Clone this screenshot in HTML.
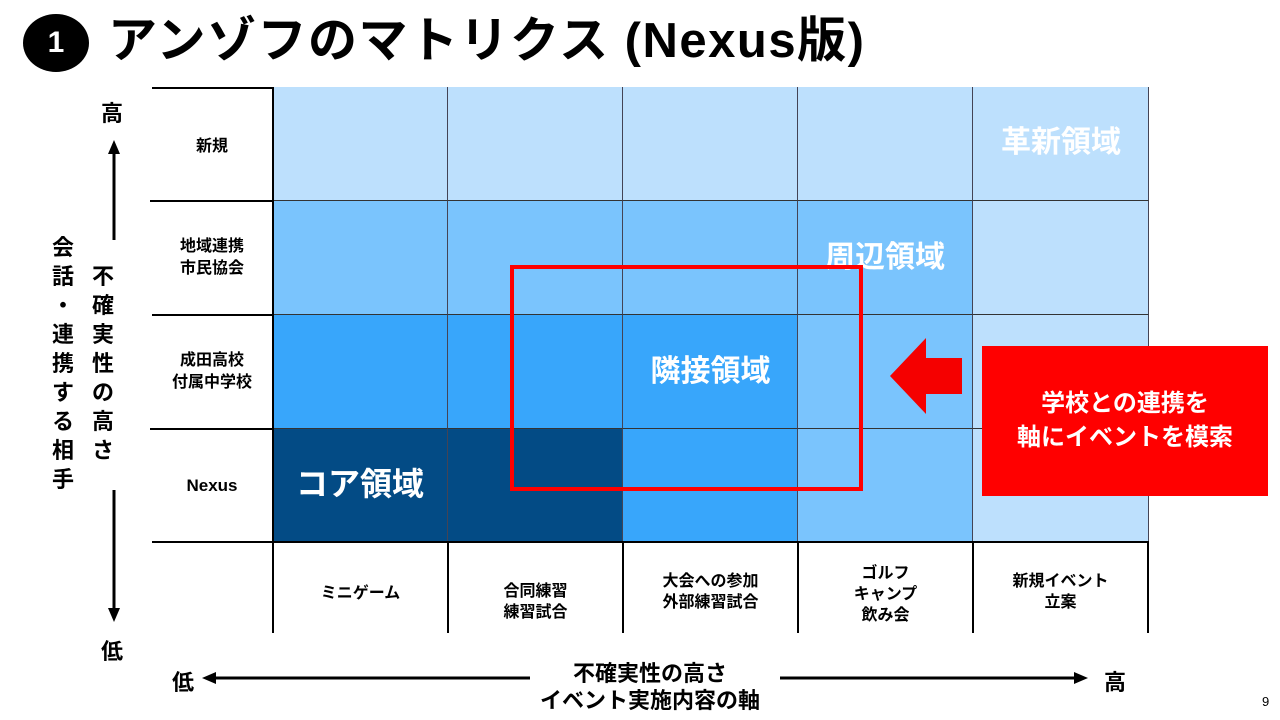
<!DOCTYPE html>
<html><head><meta charset="utf-8"><style>
*{margin:0;padding:0;box-sizing:border-box}
body{width:1280px;height:720px;background:#fff;position:relative;overflow:hidden;font-family:"Liberation Sans","Noto Sans CJK JP",sans-serif;font-weight:bold;color:#000}
.a{position:absolute}
.c{position:absolute;display:flex;align-items:center;justify-content:center;text-align:center}
.L{background:#BDE0FD}.M{background:#7AC4FD}.B{background:#38A6FB}.D{background:#034B85}
.h{position:absolute;background:#000;height:2px}
.v{position:absolute;background:#000;width:2px}
.cell{position:absolute;border-right:1px solid #445;border-bottom:1px solid #333}
</style></head><body>
<div class="c" style="left:23px;top:14px;width:66px;height:58px;border-radius:50%;background:#000;color:#fff;font-size:30px">1</div>
<div class="a" style="left:108px;top:10px;font-size:49px;line-height:62px;white-space:nowrap;letter-spacing:1.5px">アンゾフのマトリクス (Nexus版)</div>

<div class="cell L" style="left:273px;top:87px;width:175px;height:114px"></div>
<div class="cell L" style="left:448px;top:87px;width:175px;height:114px"></div>
<div class="cell L" style="left:623px;top:87px;width:175px;height:114px"></div>
<div class="cell L" style="left:798px;top:87px;width:175px;height:114px"></div>
<div class="cell L" style="left:973px;top:87px;width:176px;height:114px"></div>
<div class="cell M" style="left:273px;top:201px;width:175px;height:114px"></div>
<div class="cell M" style="left:448px;top:201px;width:175px;height:114px"></div>
<div class="cell M" style="left:623px;top:201px;width:175px;height:114px"></div>
<div class="cell M" style="left:798px;top:201px;width:175px;height:114px"></div>
<div class="cell L" style="left:973px;top:201px;width:176px;height:114px"></div>
<div class="cell B" style="left:273px;top:315px;width:175px;height:114px"></div>
<div class="cell B" style="left:448px;top:315px;width:175px;height:114px"></div>
<div class="cell B" style="left:623px;top:315px;width:175px;height:114px"></div>
<div class="cell M" style="left:798px;top:315px;width:175px;height:114px"></div>
<div class="cell L" style="left:973px;top:315px;width:176px;height:114px"></div>
<div class="cell D" style="left:273px;top:429px;width:175px;height:114px"></div>
<div class="cell D" style="left:448px;top:429px;width:175px;height:114px"></div>
<div class="cell B" style="left:623px;top:429px;width:175px;height:114px"></div>
<div class="cell M" style="left:798px;top:429px;width:175px;height:114px"></div>
<div class="cell L" style="left:973px;top:429px;width:176px;height:114px"></div>

<div class="h" style="left:152px;top:87px;width:122px"></div>
<div class="h" style="left:150px;top:200px;width:124px"></div>
<div class="h" style="left:152px;top:314px;width:122px"></div>
<div class="h" style="left:150px;top:428px;width:124px"></div>
<div class="h" style="left:152px;top:541px;width:997px"></div>
<div class="v" style="left:272px;top:87px;height:546px"></div>
<div class="v" style="left:447px;top:541px;height:92px"></div>
<div class="v" style="left:622px;top:541px;height:92px"></div>
<div class="v" style="left:797px;top:541px;height:92px"></div>
<div class="v" style="left:972px;top:541px;height:92px"></div>
<div class="v" style="left:1147px;top:541px;height:92px"></div>

<div class="c" style="left:152px;top:87px;width:120px;height:114px;font-size:16px">新規</div>
<div class="c" style="left:152px;top:201px;width:120px;height:114px;font-size:16px;line-height:22px">地域連携<br>市民協会</div>
<div class="c" style="left:152px;top:315px;width:120px;height:114px;font-size:16px;line-height:22px">成田高校<br>付属中学校</div>
<div class="c" style="left:152px;top:429px;width:120px;height:114px;font-size:17px">Nexus</div>
<div class="c" style="left:273px;top:543px;width:175px;height:95px;font-size:16px">ミニゲーム</div>
<div class="c" style="left:448px;top:543px;width:175px;height:115px;font-size:16px;line-height:21px;align-items:flex-start;padding-top:38px">合同練習<br>練習試合</div>
<div class="c" style="left:623px;top:543px;width:175px;height:115px;font-size:16px;line-height:21px;align-items:flex-start;padding-top:28px">大会への参加<br>外部練習試合</div>
<div class="c" style="left:798px;top:543px;width:175px;height:115px;font-size:16px;line-height:21px;align-items:flex-start;padding-top:20px">ゴルフ<br>キャンプ<br>飲み会</div>
<div class="c" style="left:973px;top:543px;width:175px;height:115px;font-size:16px;line-height:21px;align-items:flex-start;padding-top:28px">新規イベント<br>立案</div>

<div class="c" style="left:973px;top:119px;width:176px;height:40px;font-size:30px;color:#fff">革新領域</div>
<div class="c" style="left:795px;top:234px;width:180px;height:40px;font-size:30px;color:#fff">周辺領域</div>
<div class="c" style="left:623px;top:348px;width:175px;height:40px;font-size:30px;color:#fff">隣接領域</div>
<div class="c" style="left:270px;top:461px;width:180px;height:42px;font-size:32px;color:#fff">コア領域</div>

<div class="a" style="left:510px;top:265px;width:353px;height:226px;border:4px solid #FF0000"></div>
<svg class="a" style="left:888px;top:336px" width="76" height="80"><polygon points="2,40 38,2 38,22 74,22 74,58 38,58 38,78" fill="#F50000"/></svg>
<div class="c" style="left:982px;top:346px;width:286px;height:150px;background:#FF0000;color:#fff;font-size:24px;line-height:34px">学校との連携を<br>軸にイベントを模索</div>

<div class="a" style="left:101px;top:96px;font-size:22px">高</div>
<div class="a" style="left:101px;top:634px;font-size:22px">低</div>
<svg class="a" style="left:100px;top:138px" width="30" height="490">
<polygon points="14,2 8,16 20,16" fill="#000"/><rect x="12.5" y="12" width="3" height="90" fill="#000"/>
<rect x="12.5" y="352" width="3" height="124" fill="#000"/><polygon points="14,484 8,470 20,470" fill="#000"/></svg>
<div class="a" style="left:90px;top:262px;width:26px;font-size:22px;line-height:29px;text-align:center">不<br>確<br>実<br>性<br>の<br>高<br>さ</div>
<div class="a" style="left:50px;top:233px;width:26px;font-size:22px;line-height:29px;text-align:center">会<br>話<br>・<br>連<br>携<br>す<br>る<br>相<br>手</div>

<div class="a" style="left:172px;top:665px;font-size:22px">低</div>
<div class="a" style="left:1104px;top:665px;font-size:22px">高</div>
<svg class="a" style="left:200px;top:668px" width="890" height="20">
<polygon points="2,10 16,4 16,16" fill="#000"/><rect x="12" y="8.5" width="318" height="3" fill="#000"/>
<rect x="580" y="8.5" width="300" height="3" fill="#000"/><polygon points="888,10 874,4 874,16" fill="#000"/></svg>
<div class="c" style="left:500px;top:660px;width:300px;height:54px;font-size:22px;line-height:27px">不確実性の高さ<br>イベント実施内容の軸</div>
<div class="a" style="left:1262px;top:694px;font-size:13px;font-weight:normal">9</div>
</body></html>
